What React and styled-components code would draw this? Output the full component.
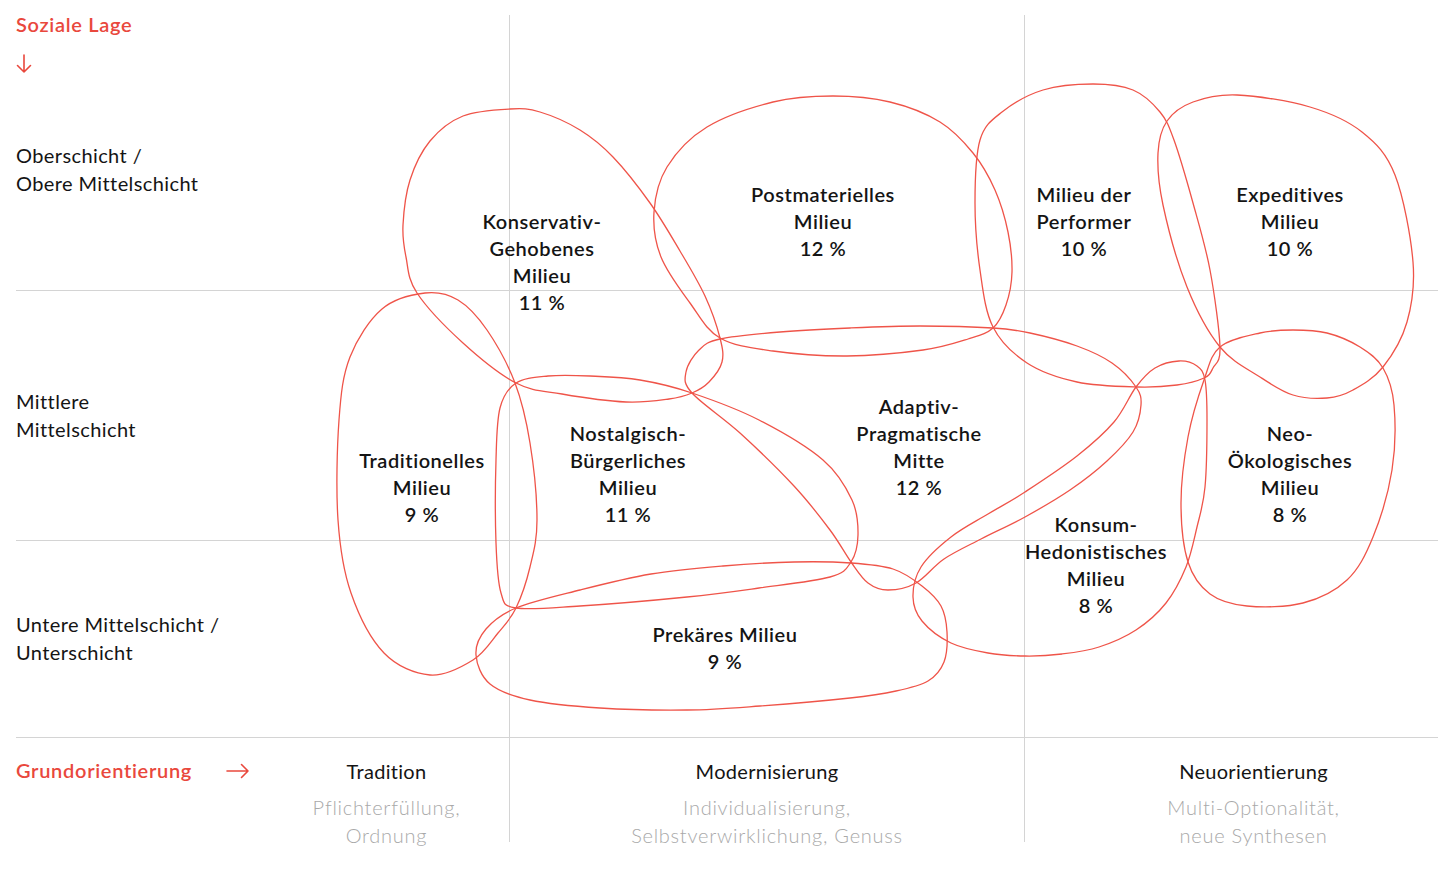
import React from 'react'
import styled, { createGlobalStyle } from 'styled-components'

const RED = '#e9483d'
const CURVE = '#ef5449'
const RULE = '#d4d4d4'

const GlobalStyle = createGlobalStyle`
  html, body {
    margin: 0;
    padding: 0;
    background: #ffffff;
  }
  body {
    font-family: Lato, 'Noto Sans', sans-serif;
    color: #161616;
  }
`

// outline points of each milieu, in page coordinates
const shapes = [
  // Konservativ-Gehobenes
  [[510,109],[540,112],[580,130],[613,157],[650,203],[680,251],[705,296],[720,338],[722,362],[709,382],[692,393],[669,399],[626,402],[562,394],[516,383],[463,343],[417,293],[406,257],[403,225],[410,180],[430,141],[463,116]],
  // Postmaterielles
  [[833,96],[890,102],[940,122],[973,153],[995,190],[1008,232],[1012,272],[1006,305],[993,328],[968,339],[923,350],[847,356],[773,351],[720,338],[690,303],[661,257],[654,212],[667,167],[707,127],[773,102]],
  // Milieu der Performer
  [[1093,84],[1133,90],[1160,112],[1174,140],[1193,203],[1210,270],[1220,347],[1213,368],[1204,378],[1177,385],[1137,387],[1077,382],[1027,363],[993,327],[980,270],[975,203],[980,140],[1002,112],[1043,90]],
  // Expeditives
  [[1237,95],[1310,107],[1362,132],[1395,175],[1413,262],[1407,322],[1383,367],[1353,390],[1327,398],[1293,395],[1260,377],[1220,347],[1187,287],[1163,205],[1158,153],[1167,121],[1193,102]],
  // Traditionelles
  [[425,293],[458,300],[487,330],[515,383],[530,443],[537,520],[530,567],[516,608],[498,633],[473,660],[430,675],[384,653],[351,593],[338,520],[339,420],[350,357],[382,309]],
  // Nostalgisch-Buergerliches
  [[516,383],[548,376],[590,376],[640,380],[692,393],[759,420],[823,460],[852,500],[858,535],[851,562],[830,577],[759,588],[687,597],[580,606],[516,608],[501,593],[496,543],[496,460],[500,408]],
  // Adaptiv-Pragmatische Mitte
  [[720,339],[780,332],[850,328],[920,326],[993,328],[1030,333],[1077,346],[1112,363],[1136,387],[1141,405],[1133,432],[1107,461],[1070,490],[1025,517],[981,539],[944,559],[916,583],[888,590],[868,583],[851,562],[830,530],[794,486],[740,433],[692,393],[686,372],[699,350]],
  // Konsum-Hedonistisches
  [[1136,387],[1155,368],[1179,361],[1197,366],[1205,380],[1207,420],[1205,487],[1197,527],[1186,567],[1166,603],[1136,630],[1099,647],[1062,654],[1025,656],[988,653],[951,643],[922,621],[913,597],[921,567],[951,537],[988,514],[1025,492],[1077,456],[1114,422]],
  // Neo-Oekologisches
  [[1220,347],[1260,333],[1293,330],[1327,333],[1360,347],[1383,368],[1394,405],[1392,470],[1373,537],[1347,580],[1303,603],[1247,606],[1210,594],[1188,562],[1181,503],[1188,437],[1204,380]],
  // Prekaeres
  [[516,608],[580,590],[651,574],[723,566],[794,562],[851,563],[893,569],[922,586],[941,606],[947,632],[944,662],[928,681],[896,691],[850,698],[760,706],[687,710],[600,708],[530,700],[490,684],[476,655],[486,629]],
]

const toPath = pts => {
  const n = pts.length
  let d = `M${pts[0][0]},${pts[0][1]}`
  for (let i = 0; i < n; i++) {
    const p0 = pts[(i - 1 + n) % n]
    const p1 = pts[i]
    const p2 = pts[(i + 1) % n]
    const p3 = pts[(i + 2) % n]
    const c1 = [p1[0] + (p2[0] - p0[0]) / 6, p1[1] + (p2[1] - p0[1]) / 6]
    const c2 = [p2[0] - (p3[0] - p1[0]) / 6, p2[1] - (p3[1] - p1[1]) / 6]
    d += ` C${c1[0].toFixed(1)},${c1[1].toFixed(1)} ${c2[0].toFixed(1)},${c2[1].toFixed(1)} ${p2[0]},${p2[1]}`
  }
  return d + ' Z'
}

const milieus = [
  { x: 542, y: 222, lines: ['Konservativ-', 'Gehobenes', 'Milieu', '11 %'] },
  { x: 823, y: 195, lines: ['Postmaterielles', 'Milieu', '12 %'] },
  { x: 1084, y: 195, lines: ['Milieu der', 'Performer', '10 %'] },
  { x: 1290, y: 195, lines: ['Expeditives', 'Milieu', '10 %'] },
  { x: 422, y: 461, lines: ['Traditionelles', 'Milieu', '9 %'] },
  { x: 628, y: 434, lines: ['Nostalgisch-', 'Bürgerliches', 'Milieu', '11 %'] },
  { x: 919, y: 407, lines: ['Adaptiv-', 'Pragmatische', 'Mitte', '12 %'] },
  { x: 1290, y: 434, lines: ['Neo-', 'Ökologisches', 'Milieu', '8 %'] },
  { x: 1096, y: 525, lines: ['Konsum-', 'Hedonistisches', 'Milieu', '8 %'] },
  { x: 725, y: 635, lines: ['Prekäres Milieu', '9 %'] },
]

const orientations = [
  { title: 'Tradition', sub: ['Pflichterfüllung,', 'Ordnung'] },
  { title: 'Modernisierung', sub: ['Individualisierung,', 'Selbstverwirklichung, Genuss'] },
  { title: 'Neuorientierung', sub: ['Multi-Optionalität,', 'neue Synthesen'], shift: 44 },
]

const DownArrow = () => (
  <svg width="16" height="20" viewBox="0 0 16 20" fill="none" stroke={RED} strokeWidth="1.6" strokeLinecap="round" strokeLinejoin="round">
    <path d="M8 1 V18 M1.5 11.5 L8 18 L14.5 11.5" />
  </svg>
)

const RightArrow = () => (
  <svg width="24" height="16" viewBox="0 0 24 16" fill="none" stroke={RED} strokeWidth="1.6" strokeLinecap="round" strokeLinejoin="round">
    <path d="M1 8 H22 M15.5 1.5 L22 8 L15.5 14.5" />
  </svg>
)

export default function App() {
  return (
    <>
      <GlobalStyle />
      <Page>
        <Chart>
          <Cell>
            <AxisTitle>Soziale Lage</AxisTitle>
            <ArrowDownWrap>
              <DownArrow />
            </ArrowDownWrap>
            <RowLabel $top>
              Oberschicht /<br />Obere Mittelschicht
            </RowLabel>
          </Cell>
          <Cell />
          <Cell $divider />
          <Cell $divider />

          <Cell $ruled $center>
            <RowLabel>
              Mittlere<br />Mittelschicht
            </RowLabel>
          </Cell>
          <Cell $ruled />
          <Cell $ruled $divider />
          <Cell $ruled $divider />

          <Cell $ruled $center>
            <RowLabel>
              Untere Mittelschicht /<br />Unterschicht
            </RowLabel>
          </Cell>
          <Cell $ruled />
          <Cell $ruled $divider />
          <Cell $ruled $divider />

          <Cell $ruled>
            <AxisFoot>
              <AxisTitle>Grundorientierung</AxisTitle>
              <RightArrow />
            </AxisFoot>
          </Cell>
          {orientations.map((o, i) => (
            <Cell key={o.title} $ruled $divider={i > 0}>
              <Orientation $shift={o.shift || 0}>
                <OrientationTitle>{o.title}</OrientationTitle>
                <OrientationSub>
                  {o.sub.map(s => (
                    <div key={s}>{s}</div>
                  ))}
                </OrientationSub>
              </Orientation>
            </Cell>
          ))}
        </Chart>

        <Curves viewBox="0 0 1438 880" width="1438" height="880">
          {shapes.map((pts, i) => (
            <path key={i} d={toPath(pts)} />
          ))}
        </Curves>

        {milieus.map(m => (
          <Milieu key={m.lines[0]} style={{ left: m.x, top: m.y - 14.5 }}>
            {m.lines.map(l => (
              <div key={l}>{l}</div>
            ))}
          </Milieu>
        ))}
      </Page>
    </>
  )
}

const Page = styled.div`
  position: relative;
  width: 1438px;
  height: 880px;
  overflow: hidden;
  background: #ffffff;
`

const Chart = styled.div`
  display: grid;
  grid-template-columns: 248px 245px 515px 414px;
  grid-template-rows: 275px 250px 197px 105px;
  padding: 15px 0 0 16px;
`

const Cell = styled.div`
  box-sizing: border-box;
  display: flex;
  flex-direction: column;
  justify-content: ${p => (p.$center ? 'center' : 'flex-start')};
  border-left: ${p => (p.$divider ? `1px solid ${RULE}` : 'none')};
  border-top: ${p => (p.$ruled ? `1px solid ${RULE}` : 'none')};
`

const AxisTitle = styled.div`
  color: ${RED};
  font-size: 20px;
  font-weight: 600;
  line-height: 20px;
  letter-spacing: 0.7px;
  margin-top: -1px;
`

const ArrowDownWrap = styled.div`
  display: flex;
  margin-top: 20px;
  height: 20px;
`

const RowLabel = styled.div`
  font-size: 20px;
  line-height: 28px;
  font-weight: 400;
  letter-spacing: 0.4px;
  color: #141414;
  margin-top: ${p => (p.$top ? '67px' : '-2px')};
`

const AxisFoot = styled.div`
  display: flex;
  align-items: center;
  gap: 34px;
  padding-top: 23px;
`

const Orientation = styled.div`
  display: flex;
  flex-direction: column;
  align-items: center;
  text-align: center;
  padding-top: 19px;
  padding-left: ${p => p.$shift}px;
`

const OrientationTitle = styled.div`
  font-size: 20px;
  line-height: 28px;
  letter-spacing: 0.3px;
  color: #141414;
  margin-bottom: 8px;
`

const OrientationSub = styled.div`
  font-size: 20px;
  line-height: 28px;
  font-weight: 300;
  letter-spacing: 0.75px;
  color: #a9a9a9;
`

const Curves = styled.svg`
  position: absolute;
  top: 0;
  left: 0;
  pointer-events: none;
  fill: none;
  stroke: ${CURVE};
  stroke-width: 1.3;
`

const Milieu = styled.div`
  position: absolute;
  transform: translateX(-50%);
  text-align: center;
  white-space: nowrap;
  font-size: 20px;
  line-height: 27px;
  font-weight: 600;
  letter-spacing: 0.55px;
  color: #141414;
`
